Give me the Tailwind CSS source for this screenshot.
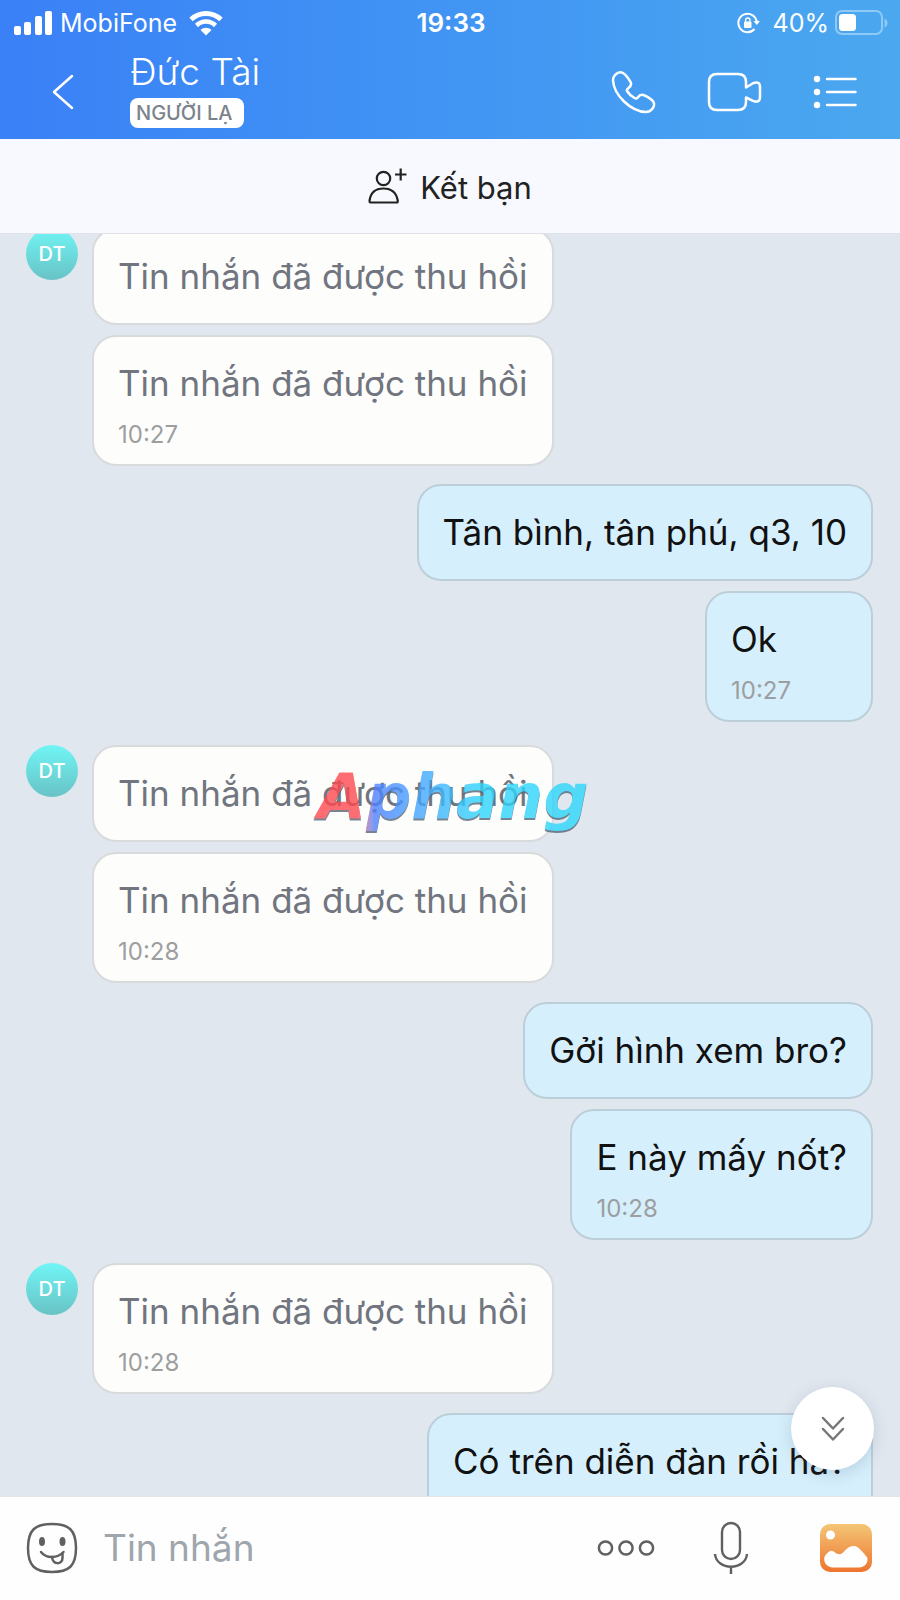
<!DOCTYPE html>
<html lang="vi">
<head>
  <meta charset="UTF-8"/>
  <meta name="viewport" content="width=device-width, initial-scale=1.0"/>
  <title>Đức Tài - Tin nhắn</title>
  <script src="https://cdn.jsdelivr.net/npm/@tailwindcss/browser@4"></script>
</head>
<body class="flex h-screen flex-col overflow-hidden bg-[#e1e7ef] font-['Inter','Noto_Sans',sans-serif]">
  <header class="shrink-0 bg-linear-to-r from-[#3a80f7] to-[#4ba8ef] text-white">
    <!-- Status bar -->
    <div class="grid h-[46px] grid-cols-3 items-center pr-3 pl-3.5 text-[25px] leading-[30px]">
      <div class="flex items-center">
        <svg class="mr-2" width="38" height="24" viewBox="0 0 38 24" fill="currentColor">
          <rect x="0" y="15" width="7" height="9" rx="2"/>
          <rect x="10" y="11" width="7" height="13" rx="2"/>
          <rect x="21" y="5" width="7" height="19" rx="2"/>
          <rect x="31" y="0" width="7" height="24" rx="2"/>
        </svg>
        <span>MobiFone</span>
        <svg class="ml-3" width="34" height="25" viewBox="0 0 34 25" fill="none" stroke="currentColor">
          <path d="M2 8.5C10.500 0.500 23.500 0.500 32 8.500" stroke-width="5"/>
          <path d="M7.500 14.500C13 9.300 21 9.300 26.500 14.500" stroke-width="4.500"/>
          <path d="M11.500 19C14.500 16 19.500 16 22.500 19L17 24.500Z" fill="currentColor" stroke="none"/>
        </svg>
      </div>
      <span class="text-center text-[26px] font-semibold">19:33</span>
      <div class="flex items-center justify-end">
        <svg class="mr-3" width="24" height="22" viewBox="0 0 24 22" fill="none" stroke="currentColor" stroke-width="2">
          <path d="M19.700 10A9.200 9.200 0 1 0 17.500 17"/>
          <path d="M16.500 9H23L19.800 13Z" fill="currentColor" stroke="none"/>
          <rect x="7" y="9.500" width="7.500" height="6.500" rx="1" fill="currentColor" stroke="none"/>
          <path d="M8.600 10V8.200A2.200 2.200 0 0 1 13 8.200V10" stroke-width="1.300"/>
        </svg>
        <span>40%</span>
        <svg class="ml-1.5" width="53" height="26" viewBox="0 0 53 26" fill="none">
          <rect x="1" y="1" width="46" height="23" rx="6" stroke="#8fcaf6" stroke-width="2"/>
          <rect x="4" y="4" width="17" height="17" rx="3.500" fill="#fff"/>
          <path d="M49.500 8.500Q52.500 10 52.500 13T49.500 17.500Z" fill="#8fcaf6"/>
        </svg>
      </div>
    </div>

    <!-- Chat title -->
    <div class="flex h-[93px] items-center pr-[42px] pb-0.5 pl-[50px]">
      <button type="button" aria-label="Quay lại" class="mr-[54px]">
        <svg width="26" height="36" viewBox="0 0 26 36" fill="none" stroke="currentColor" stroke-width="2.500" stroke-linecap="round" stroke-linejoin="round"><path d="M22 2L4 18L22 34"/></svg>
      </button>
      <div class="flex-1 pb-2.5">
        <h1 class="text-[37px] leading-[52px] font-light">Đức Tài</h1>
        <span class="block w-fit rounded-lg bg-white pr-3 pl-1.5 text-xl leading-[30px] font-medium text-[#7b838c]">NGƯỜI LẠ</span>
      </div>
      <div class="flex items-center gap-[50px]">
        <button type="button" aria-label="Gọi thoại">
          <svg width="47" height="44" viewBox="0 0 47 44" fill="none" stroke="currentColor" stroke-width="2.500" stroke-linejoin="round"><path d="M13 3C9 .8 3 4.500 3 10.500C4 25 20.500 41.500 36 42C41.500 42 45.500 36 43.500 32C42 29.500 37 26.500 33.500 25C31 24 29.500 25 28 27.300C27 28.800 25.800 28.700 24.500 28C21 26 18.500 23.500 17 21C16.300 19.800 17 19.300 18.500 18C21 16 22 14.500 20.500 12C18.500 8.500 15.500 4.500 13 3Z"/></svg>
        </button>
        <button type="button" aria-label="Gọi video">
          <svg width="55" height="40" viewBox="0 0 55 40" fill="none" stroke="currentColor" stroke-width="2.500" stroke-linejoin="round"><path d="M10 2H31Q39 2 39 10V15.500L46 11.200Q53 8.500 53 15V25Q53 31.500 46 28.800L39 25.500V30Q39 38 31 38H10Q2 38 2 30V10Q2 2 10 2Z"/></svg>
        </button>
        <button type="button" aria-label="Tùy chọn">
          <svg width="46" height="36" viewBox="0 0 46 36" fill="none" stroke="currentColor" stroke-width="2.500" stroke-linecap="round">
            <g fill="currentColor" stroke="none"><circle cx="5" cy="5" r="3.200"/><circle cx="5" cy="18" r="3.200"/><circle cx="5" cy="31" r="3.200"/></g>
            <path d="M15 5H43.500M15 18H43.500M15 31H43.500"/>
          </svg>
        </button>
      </div>
    </div>
  </header>

  <button type="button" class="flex h-[95px] w-full shrink-0 items-center justify-center gap-3 border-b border-[#dfe2e8] bg-[#f8f9fe] pt-1 text-[31px] text-[#222]">
    <svg class="mb-1" width="40" height="38" viewBox="0 0 40 38" fill="none" stroke="currentColor" stroke-width="2.200" stroke-linejoin="round">
      <circle cx="15.500" cy="11.500" r="6.700"/>
      <path d="M2.500 35.500Q1.500 35.500 1.500 34C2.500 25.500 8 21.500 15.500 21.500S28.500 25.500 29.800 34Q29.800 35.500 28.500 35.500Z"/>
      <path d="M27 7.500H38.500M32.700 1.500V13.500"/>
    </svg>
    Kết bạn
  </button>

  <main class="relative min-h-0 flex-1 overflow-hidden">
    <div class="-mt-1.5 flex flex-col pr-[27px] pl-[26px] text-[35px] leading-[48px]">
      <section class="mb-[18px] flex items-start gap-3.5">
        <div class="flex size-[52px] items-center justify-center rounded-full bg-linear-to-b from-[#70f5f6] to-[#68c3c5] text-xl font-medium text-white">DT</div>
        <div class="flex flex-col items-start gap-2.5 text-[#70757f]">
          <p class="rounded-3xl border-2 border-[#d9dadb] bg-[#fdfefc] px-6 pt-[22px] pb-[23px]">Tin nhắn đã được thu hồi</p>
          <div class="rounded-3xl border-2 border-[#d9dadb] bg-[#fdfefc] px-6 pt-[22px] pb-[15px]">
            <p>Tin nhắn đã được thu hồi</p>
            <time class="mt-3.5 block text-2xl leading-7 text-[#9c9ea0]">10:27</time>
          </div>
        </div>
      </section>

      <section class="mb-[23px] flex flex-col items-end gap-2.5 text-[#111]">
        <p class="rounded-3xl border-2 border-[#bccfd9] bg-[#d6effc] px-6 pt-[22px] pb-[23px]">Tân bình, tân phú, q3, 10</p>
        <div class="min-w-[168px] rounded-3xl border-2 border-[#bccfd9] bg-[#d6effc] px-6 pt-[22px] pb-[15px]">
          <p>Ok</p>
          <time class="mt-3.5 block text-2xl leading-7 text-[#9c9ea0]">10:27</time>
        </div>
      </section>

      <section class="mb-[19px] flex items-start gap-3.5">
        <div class="flex size-[52px] items-center justify-center rounded-full bg-linear-to-b from-[#70f5f6] to-[#68c3c5] text-xl font-medium text-white">DT</div>
        <div class="flex flex-col items-start gap-2.5 text-[#70757f]">
          <p class="rounded-3xl border-2 border-[#d9dadb] bg-[#fdfefc] px-6 pt-[22px] pb-[23px]">Tin nhắn đã được thu hồi</p>
          <div class="rounded-3xl border-2 border-[#d9dadb] bg-[#fdfefc] px-6 pt-[22px] pb-[15px]">
            <p>Tin nhắn đã được thu hồi</p>
            <time class="mt-3.5 block text-2xl leading-7 text-[#9c9ea0]">10:28</time>
          </div>
        </div>
      </section>

      <section class="mb-[23px] flex flex-col items-end gap-2.5 text-[#111]">
        <p class="rounded-3xl border-2 border-[#bccfd9] bg-[#d6effc] px-6 pt-[22px] pb-[23px]">Gởi hình xem bro?</p>
        <div class="min-w-[168px] rounded-3xl border-2 border-[#bccfd9] bg-[#d6effc] px-6 pt-[22px] pb-[15px]">
          <p>E này mấy nốt?</p>
          <time class="mt-3.5 block text-2xl leading-7 text-[#9c9ea0]">10:28</time>
        </div>
      </section>

      <section class="mb-[19px] flex items-start gap-3.5">
        <div class="flex size-[52px] items-center justify-center rounded-full bg-linear-to-b from-[#70f5f6] to-[#68c3c5] text-xl font-medium text-white">DT</div>
        <div class="rounded-3xl border-2 border-[#d9dadb] bg-[#fdfefc] px-6 pt-[22px] pb-[15px] text-[#70757f]">
          <p>Tin nhắn đã được thu hồi</p>
          <time class="mt-3.5 block text-2xl leading-7 text-[#9c9ea0]">10:28</time>
        </div>
      </section>

      <section class="flex flex-col items-end text-[#111]">
        <p class="rounded-3xl border-2 border-[#bccfd9] bg-[#d6effc] px-6 pt-[22px] pb-14">Có trên diễn đàn rồi hả?</p>
      </section>
    </div>

    <!-- Watermark over the messages -->
    <div class="pointer-events-none absolute inset-x-0 top-[523px] flex justify-center pl-1.5 opacity-80 drop-shadow-[0_2px_0_#567]">
      <span class="bg-linear-to-r from-[#ff4a50] from-16% via-[#4d80ff] via-22% to-[#2ed6fb] to-60% bg-clip-text px-1 font-['DejaVu_Sans',sans-serif] text-[63px] leading-[80px] font-bold text-transparent italic">Aphang</span>
    </div>

    <button type="button" aria-label="Xuống cuối" class="absolute right-[26px] bottom-[26px] flex size-[83px] items-center justify-center rounded-full bg-white text-[#777] shadow-[0_4px_16px_rgba(60,90,120,0.2)]">
      <svg width="26" height="26" viewBox="0 0 26 26" fill="none" stroke="currentColor" stroke-width="2.500" stroke-linecap="round" stroke-linejoin="round"><path d="M3 2L13 12.500L23 2M3 13L13 23.500L23 13"/></svg>
    </button>
  </main>

  <form class="flex h-[104px] shrink-0 items-center border-t border-[#e2e4e7] bg-[#fefefe] pr-7 pb-0.5 pl-[26px] text-[#606060]">
    <button type="button" aria-label="Nhãn dán">
      <svg width="52" height="52" viewBox="0 0 52 52" fill="none" stroke="currentColor" stroke-width="2.500" stroke-linecap="round" stroke-linejoin="round">
        <path d="M26 2C43 2 50 8 50 26S43 50 26 50S2 44 2 26S9 2 26 2Z"/>
        <g fill="currentColor" stroke="none"><ellipse cx="16" cy="19.500" rx="3" ry="4.500"/><ellipse cx="36.500" cy="19.500" rx="3" ry="4.500"/></g>
        <path d="M15 30C20 36.500 31 37 37.500 30"/>
        <path d="M26 35C26.500 43 36.500 43 36.500 36V31.500"/>
      </svg>
    </button>
    <input type="text" aria-label="Tin nhắn" placeholder="Tin nhắn" class="mr-6 ml-[25px] min-w-0 flex-1 text-[37px] leading-[52px] outline-none placeholder:text-[#9ea6ad]"/>
    <div class="flex items-center">
      <button type="button" aria-label="Thêm" class="mr-[58px]">
        <svg width="58" height="18" viewBox="0 0 58 18" fill="none" stroke="currentColor" stroke-width="2.500"><circle cx="8.500" cy="9" r="6.600"/><circle cx="29" cy="9" r="6.600"/><circle cx="49.500" cy="9" r="6.600"/></svg>
      </button>
      <button type="button" aria-label="Ghi âm" class="mr-[71px]">
        <svg width="36" height="54" viewBox="0 0 36 54" fill="none" stroke="currentColor" stroke-width="2.400"><rect x="9" y="2" width="18" height="36" rx="9"/><path d="M2 33C3.500 50 32.500 50 34 33M18 46V53"/></svg>
      </button>
      <button type="button" aria-label="Gửi ảnh">
        <svg width="52" height="48" viewBox="0 0 52 48">
          <defs><linearGradient id="photo" x1="0" y1="0" x2="0" y2="1"><stop offset="0" stop-color="#f4c676"/><stop offset="1" stop-color="#ed752e"/></linearGradient></defs>
          <rect width="52" height="48" rx="10" fill="url(#photo)"/>
          <circle cx="10.500" cy="11" r="4.500" fill="#fff"/>
          <path d="M4.500 33C5 31 9 27 11 26.700C14 26.500 16 30.500 20 30.200C24 30 26 22 34 22C39 22 44 30 47 33C49 38 45 43.500 39 43.500H13C7 43.500 3 38 4.500 33Z" fill="#fff"/>
        </svg>
      </button>
    </div>
  </form>
</body>
</html>
